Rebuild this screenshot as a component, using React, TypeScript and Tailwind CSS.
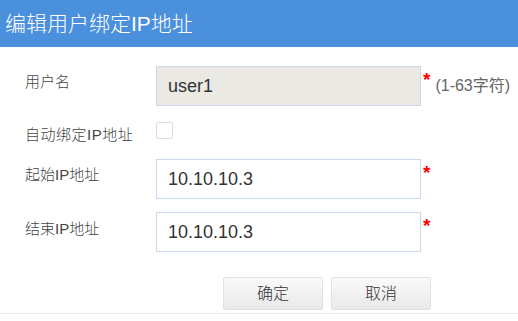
export default function App() {
  const font = "font-['Liberation_Sans','Noto_Sans_CJK_SC',sans-serif]";
  const label = "w-[156px] pl-[25px] text-[15px] font-light leading-[20px] text-[#444]";
  const field = "w-[265px] h-[40px] border border-[#cbd7ea] px-[11px] text-[18px] text-[#333] outline-none";
  const star = "ml-[2px] mt-[4px] text-[19px] font-bold leading-[19px] text-[#f00]";
  const btn =
    "w-[100px] h-[33px] border border-[#dde2ea] rounded-[2px] bg-gradient-to-b from-[#fafafa] to-[#e9e9e9] text-[16px] font-light text-[#333]";
  return (
    <div className={`w-[518px] h-[321px] bg-white ${font}`}>
      <div className="h-[47px] bg-[#4b90dd] flex items-center pl-[5px]">
        <span className="text-[21px] font-light text-white leading-none">编辑用户绑定IP地址</span>
      </div>

      <div className="pt-[19px]">
        {/* 用户名 */}
        <div className="flex items-start h-[40px]">
          <div className={`${label} pt-[6px]`}>用户名</div>
          <input readOnly value="user1" className={`${field} bg-[#eae9e3]`} />
          <span className={star}>*</span>
          <span className="ml-[5px] self-center text-[16px] text-[#666]">(1-63字符)</span>
        </div>

        {/* 自动绑定 */}
        <div className="flex items-start mt-[16px] h-[20px]">
          <div className={`${label} pt-[3px] tracking-[0.5px]`}>自动绑定IP地址</div>
          <div className="w-[17px] h-[17px] border border-[#dcdcdc] bg-white rounded-[2px]" />
        </div>

        {/* 起始IP */}
        <div className="flex items-start mt-[17px] h-[40px]">
          <div className={`${label} pt-[6px]`}>起始IP地址</div>
          <input readOnly value="10.10.10.3" className={`${field} bg-white`} />
          <span className={star}>*</span>
        </div>

        {/* 结束IP */}
        <div className="flex items-start mt-[13px] h-[40px]">
          <div className={`${label} pt-[7px]`}>结束IP地址</div>
          <input readOnly value="10.10.10.3" className={`${field} bg-white`} />
          <span className={star}>*</span>
        </div>

        <div className="flex gap-[8px] mt-[25px] pl-[223px]">
          <button className={btn}>确定</button>
          <button className={btn}>取消</button>
        </div>
        <div className="mt-[3px] h-px bg-[#e3eaf5]" />
      </div>
    </div>
  );
}
